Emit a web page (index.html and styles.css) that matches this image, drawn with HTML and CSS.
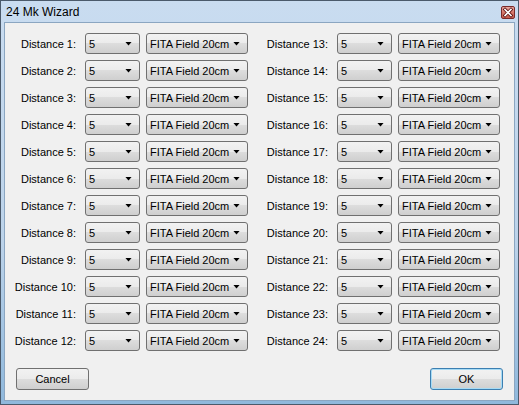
FILE: index.html
```html
<!DOCTYPE html>
<html lang="en">
<head>
  <meta charset="UTF-8">
  <title>24 Mk Wizard</title>
  <link rel="stylesheet" href="styles.css">
</head>
<body>

  <div class="window">
    <div class="titlebar">
      <span class="title">24 Mk Wizard</span>
      <span class="close">
        <svg width="14" height="13" viewBox="0 0 14 13">
          <path d="M4 3.5 L10 9.5 M10 3.5 L4 9.5" stroke="#5a1010" stroke-width="3.2" stroke-linecap="square"/>
          <path d="M4 3.5 L10 9.5 M10 3.5 L4 9.5" stroke="#fff" stroke-width="1.6" stroke-linecap="square"/>
        </svg>
      </span>
    </div>

    <div class="client">
      <div class="columns">
        <div class="column">
          <div class="row"><label>Distance 1:</label><div class="combo small"><span>5</span><i class="arrow"></i></div><div class="combo wide"><span>FITA Field 20cm</span><i class="arrow"></i></div></div>
          <div class="row"><label>Distance 2:</label><div class="combo small"><span>5</span><i class="arrow"></i></div><div class="combo wide"><span>FITA Field 20cm</span><i class="arrow"></i></div></div>
          <div class="row"><label>Distance 3:</label><div class="combo small"><span>5</span><i class="arrow"></i></div><div class="combo wide"><span>FITA Field 20cm</span><i class="arrow"></i></div></div>
          <div class="row"><label>Distance 4:</label><div class="combo small"><span>5</span><i class="arrow"></i></div><div class="combo wide"><span>FITA Field 20cm</span><i class="arrow"></i></div></div>
          <div class="row"><label>Distance 5:</label><div class="combo small"><span>5</span><i class="arrow"></i></div><div class="combo wide"><span>FITA Field 20cm</span><i class="arrow"></i></div></div>
          <div class="row"><label>Distance 6:</label><div class="combo small"><span>5</span><i class="arrow"></i></div><div class="combo wide"><span>FITA Field 20cm</span><i class="arrow"></i></div></div>
          <div class="row"><label>Distance 7:</label><div class="combo small"><span>5</span><i class="arrow"></i></div><div class="combo wide"><span>FITA Field 20cm</span><i class="arrow"></i></div></div>
          <div class="row"><label>Distance 8:</label><div class="combo small"><span>5</span><i class="arrow"></i></div><div class="combo wide"><span>FITA Field 20cm</span><i class="arrow"></i></div></div>
          <div class="row"><label>Distance 9:</label><div class="combo small"><span>5</span><i class="arrow"></i></div><div class="combo wide"><span>FITA Field 20cm</span><i class="arrow"></i></div></div>
          <div class="row"><label>Distance 10:</label><div class="combo small"><span>5</span><i class="arrow"></i></div><div class="combo wide"><span>FITA Field 20cm</span><i class="arrow"></i></div></div>
          <div class="row"><label>Distance 11:</label><div class="combo small"><span>5</span><i class="arrow"></i></div><div class="combo wide"><span>FITA Field 20cm</span><i class="arrow"></i></div></div>
          <div class="row"><label>Distance 12:</label><div class="combo small"><span>5</span><i class="arrow"></i></div><div class="combo wide"><span>FITA Field 20cm</span><i class="arrow"></i></div></div>
        </div>
        <div class="column">
          <div class="row"><label>Distance 13:</label><div class="combo small"><span>5</span><i class="arrow"></i></div><div class="combo wide"><span>FITA Field 20cm</span><i class="arrow"></i></div></div>
          <div class="row"><label>Distance 14:</label><div class="combo small"><span>5</span><i class="arrow"></i></div><div class="combo wide"><span>FITA Field 20cm</span><i class="arrow"></i></div></div>
          <div class="row"><label>Distance 15:</label><div class="combo small"><span>5</span><i class="arrow"></i></div><div class="combo wide"><span>FITA Field 20cm</span><i class="arrow"></i></div></div>
          <div class="row"><label>Distance 16:</label><div class="combo small"><span>5</span><i class="arrow"></i></div><div class="combo wide"><span>FITA Field 20cm</span><i class="arrow"></i></div></div>
          <div class="row"><label>Distance 17:</label><div class="combo small"><span>5</span><i class="arrow"></i></div><div class="combo wide"><span>FITA Field 20cm</span><i class="arrow"></i></div></div>
          <div class="row"><label>Distance 18:</label><div class="combo small"><span>5</span><i class="arrow"></i></div><div class="combo wide"><span>FITA Field 20cm</span><i class="arrow"></i></div></div>
          <div class="row"><label>Distance 19:</label><div class="combo small"><span>5</span><i class="arrow"></i></div><div class="combo wide"><span>FITA Field 20cm</span><i class="arrow"></i></div></div>
          <div class="row"><label>Distance 20:</label><div class="combo small"><span>5</span><i class="arrow"></i></div><div class="combo wide"><span>FITA Field 20cm</span><i class="arrow"></i></div></div>
          <div class="row"><label>Distance 21:</label><div class="combo small"><span>5</span><i class="arrow"></i></div><div class="combo wide"><span>FITA Field 20cm</span><i class="arrow"></i></div></div>
          <div class="row"><label>Distance 22:</label><div class="combo small"><span>5</span><i class="arrow"></i></div><div class="combo wide"><span>FITA Field 20cm</span><i class="arrow"></i></div></div>
          <div class="row"><label>Distance 23:</label><div class="combo small"><span>5</span><i class="arrow"></i></div><div class="combo wide"><span>FITA Field 20cm</span><i class="arrow"></i></div></div>
          <div class="row"><label>Distance 24:</label><div class="combo small"><span>5</span><i class="arrow"></i></div><div class="combo wide"><span>FITA Field 20cm</span><i class="arrow"></i></div></div>
        </div>
      </div>

      <div class="buttons">
        <button class="btn">Cancel</button>
        <button class="btn default">OK</button>
      </div>
    </div>
  </div>

</body>
</html>
```

FILE: styles.css
```css
body {
  margin: 0;
  font-family: 'Liberation Sans', Arial, sans-serif;
  font-size: 11px;
  color: #000;
  background: #fff;
}

.window {
  width: 519px;
  height: 405px;
  box-sizing: border-box;
  border: 1px solid #4b5a6b;
  padding: 0 3px 3px 3px;
  background: linear-gradient(to bottom, #c9dcf0 0%, #bcd3ea 60%, #8fb8dc 100%);
  display: flex;
  flex-direction: column;
}

.titlebar {
  height: 21px;
  flex: none;
  display: flex;
  align-items: center;
  justify-content: space-between;
  padding: 0 0 0 2px;
}

.title {
  font-family: 'Liberation Sans', Arial, sans-serif;
  font-size: 12px;
  color: #000;
}

.close {
  width: 14px;
  height: 13px;
  margin-top: 2px;
  box-sizing: border-box;
  border: 1px solid #7a2a2a;
  border-radius: 2px;
  background: linear-gradient(to bottom, #e8a8a0 0%, #d6786c 50%, #c55a4c 100%);
  display: flex;
}

.close svg {
  margin: -1px;
}

.client {
  flex: 1;
  background: #f0f0f0;
  border: 1px solid #8ba6c1;
  padding-top: 10px;
}

.columns {
  display: flex;
  gap: 14px;
  padding-left: 5px;
}

.column {
  display: flex;
  flex-direction: column;
  gap: 6px;
}

.row {
  display: flex;
  align-items: center;
  height: 21px;
}

.row label {
  width: 66px;
  text-align: right;
  margin-right: 9px;
}

.combo {
  height: 21px;
  box-sizing: border-box;
  border: 1px solid #707070;
  border-radius: 3px;
  background: linear-gradient(to bottom, #f2f2f2 0%, #ebebeb 50%, #dddddd 50%, #cfcfcf 100%);
  display: flex;
  align-items: center;
  justify-content: space-between;
  padding: 0 7px 0 3px;
}

.combo.small {
  width: 55px;
  margin-right: 6px;
}

.combo.wide {
  width: 102px;
}

.arrow {
  width: 7px;
  height: 4px;
  background: #000;
  clip-path: polygon(0 0, 100% 0, 50% 100%);
}

.buttons {
  display: flex;
  justify-content: space-between;
  padding: 17px 11px 0 11px;
}

.btn {
  width: 73px;
  height: 22px;
  font-family: 'Liberation Sans', Arial, sans-serif;
  font-size: 11px;
  color: #000;
  border: 1px solid #707070;
  border-radius: 3px;
  background: linear-gradient(to bottom, #f2f2f2 0%, #ebebeb 50%, #dddddd 50%, #cfcfcf 100%);
  padding: 0;
}

.btn.default {
  border-color: #3c7fb1;
  box-shadow: inset 0 0 0 1px #a7dbf5;
}
```
